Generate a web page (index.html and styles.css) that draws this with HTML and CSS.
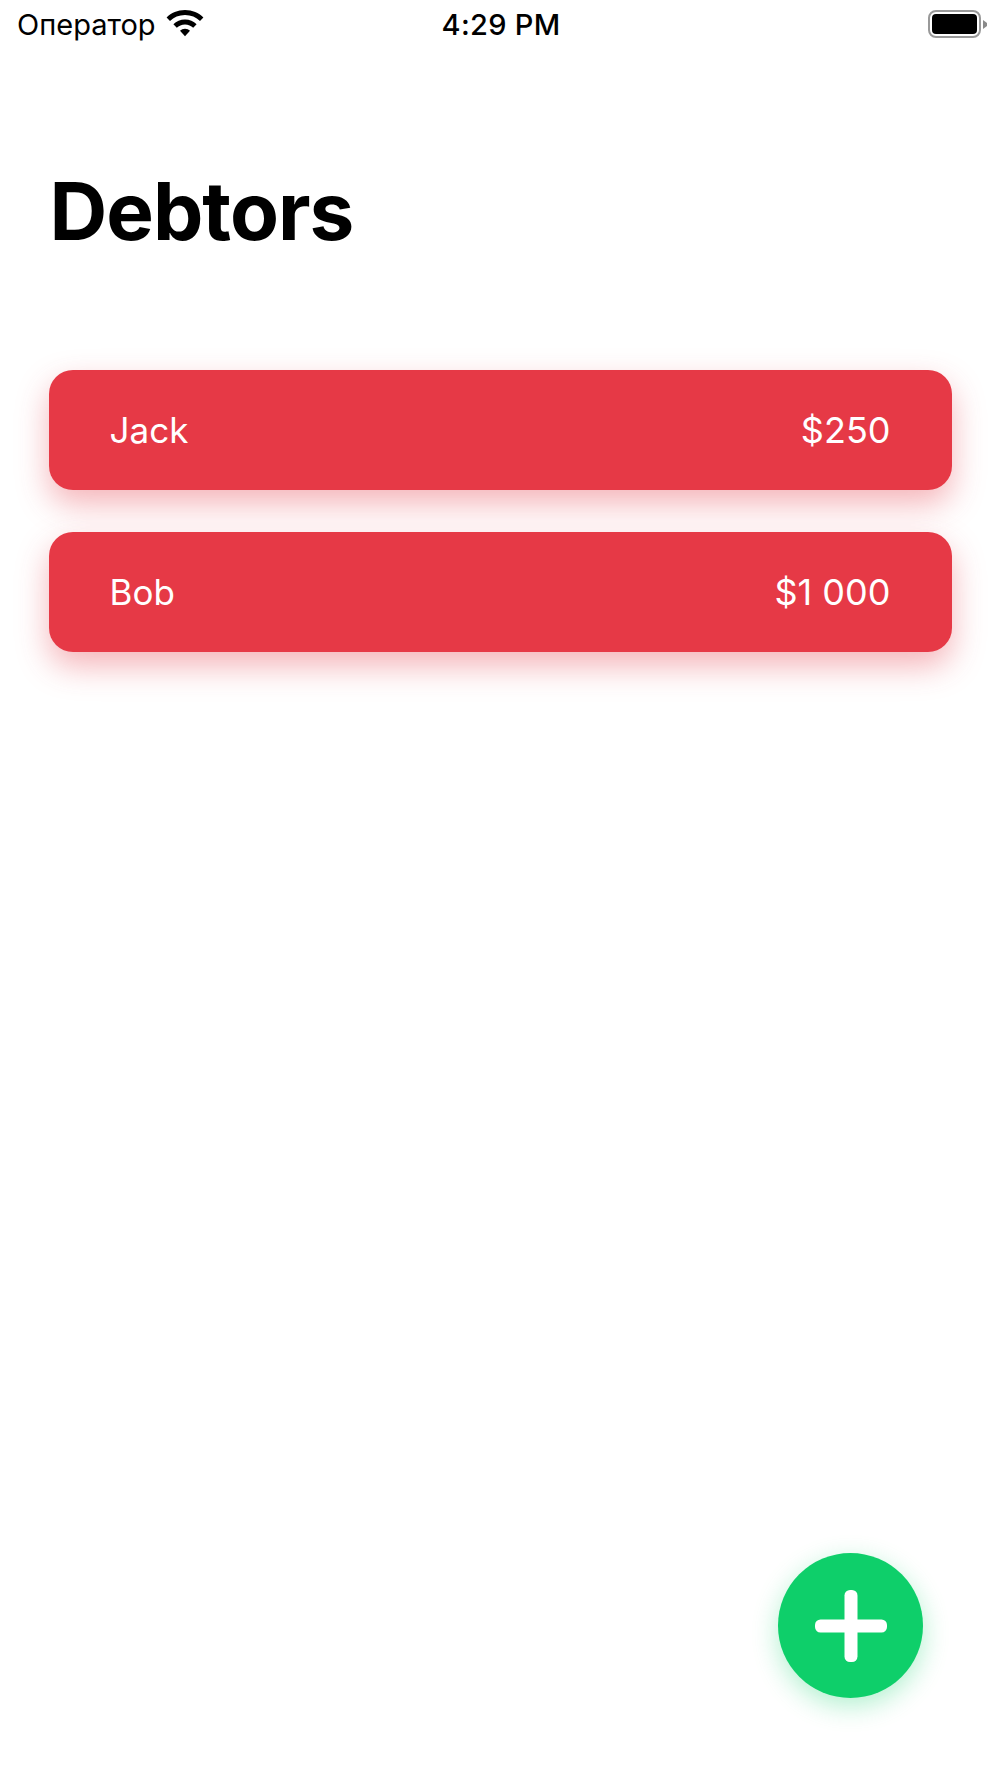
FILE: index.html
```html
<!DOCTYPE html>
<html lang="en">
<head>
<meta charset="utf-8">
<title>Debtors</title>
<link rel="stylesheet" href="styles.css">
</head>
<body>
<div class="screen">
  <header class="status-bar">
    <div class="status-left">
      <span class="carrier">Оператор</span>
      <svg class="wifi" width="38" height="27" viewBox="0 0 38 27" aria-hidden="true">
        <path d="M19 0C11.6 0 5.2 2.8 0.6 7.4L4 11C7.8 7.2 13 5 19 5C25 5 30.2 7.2 34 11L37.4 7.4C32.8 2.8 26.4 0 19 0Z"/>
        <path d="M19 9.4C14.4 9.4 10.4 11.2 7.4 14.2L10.8 17.8C12.9 15.7 15.7 14.4 19 14.4C22.3 14.4 25.1 15.7 27.2 17.8L30.6 14.2C27.6 11.2 23.6 9.4 19 9.4Z"/>
        <path d="M19 18.8C17 18.8 15.3 19.5 14 20.8L19 26.2L24 20.8C22.7 19.5 21 18.8 19 18.8Z"/>
      </svg>
    </div>
    <div class="clock">4:29 PM</div>
    <div class="status-right">
      <div class="battery"><div class="battery-level"></div></div>
      <svg class="battery-cap" width="4" height="9" viewBox="0 0 4 9" aria-hidden="true">
        <path d="M0 0L4 3V6L0 9Z"/>
      </svg>
    </div>
  </header>

  <main class="content">
    <h1 class="title">Debtors</h1>
    <ul class="debtors">
      <li class="debtor"><span>Jack</span><span class="amount">$250</span></li>
      <li class="debtor"><span>Bob</span><span class="amount">$1 000</span></li>
    </ul>
  </main>

  <button class="add-button" type="button" aria-label="Add debtor">
    <svg width="72" height="72" viewBox="0 0 72 72" aria-hidden="true">
      <rect x="29.5" y="0" width="13" height="72" rx="5.5"/>
      <rect x="0" y="29.5" width="72" height="13" rx="5.5"/>
    </svg>
  </button>
</div>
</body>
</html>
```

FILE: styles.css
```css
* {
  box-sizing: border-box;
}

html,
body {
  margin: 0;
  padding: 0;
  background: #fff;
}

.screen {
  position: relative;
  width: 1000px;
  height: 1778px;
  overflow: hidden;
  font-family: Inter, "Noto Sans", sans-serif;
  color: #000;
}

.status-bar {
  display: grid;
  grid-template-columns: 1fr auto 1fr;
  align-items: center;
  height: 50px;
  padding: 0 13px 0 17px;
}

.status-left {
  display: flex;
  align-items: center;
  gap: 10px;
}

.carrier {
  font-size: 29px;
  line-height: 50px;
}

.wifi {
  fill: #000;
  margin-top: -4px;
}

.clock {
  margin-left: -2px;
  font-size: 29px;
  font-weight: 500;
  line-height: 50px;
  letter-spacing: 0.3px;
}

.status-right {
  display: flex;
  align-items: center;
  justify-content: flex-end;
  gap: 2px;
  margin-top: -2px;
}

.battery {
  width: 53px;
  height: 28px;
  padding: 2px;
  border: 2.5px solid #999;
  border-radius: 8px;
}

.battery-level {
  height: 100%;
  background: #000;
  border-radius: 4px;
}

.battery-cap {
  fill: #8a8a8a;
}

.content {
  padding: 0 48.5px;
}

.title {
  margin: 112px 0 0 1px;
  font-size: 80px;
  line-height: 97px;
  font-weight: 700;
  letter-spacing: -1px;
}

.debtors {
  display: flex;
  flex-direction: column;
  gap: 42px;
  margin: 110.5px 0 0;
  padding: 0;
  list-style: none;
}

.debtor {
  display: flex;
  align-items: center;
  justify-content: space-between;
  height: 120px;
  padding: 0 61px;
  border-radius: 24px;
  background: #e63946;
  color: #fff;
  font-size: 35px;
  box-shadow: 0 14px 32px rgba(230, 57, 70, 0.38);
}

.amount {
  font-size: 36px;
}

.add-button {
  position: absolute;
  left: 778px;
  top: 1553px;
  display: flex;
  align-items: center;
  justify-content: center;
  width: 145px;
  height: 145px;
  padding: 0;
  border: 0;
  border-radius: 50%;
  background: #0ecf6a;
  box-shadow: 0 8px 26px rgba(14, 207, 106, 0.32);
}

.add-button svg {
  fill: #fff;
}
```
